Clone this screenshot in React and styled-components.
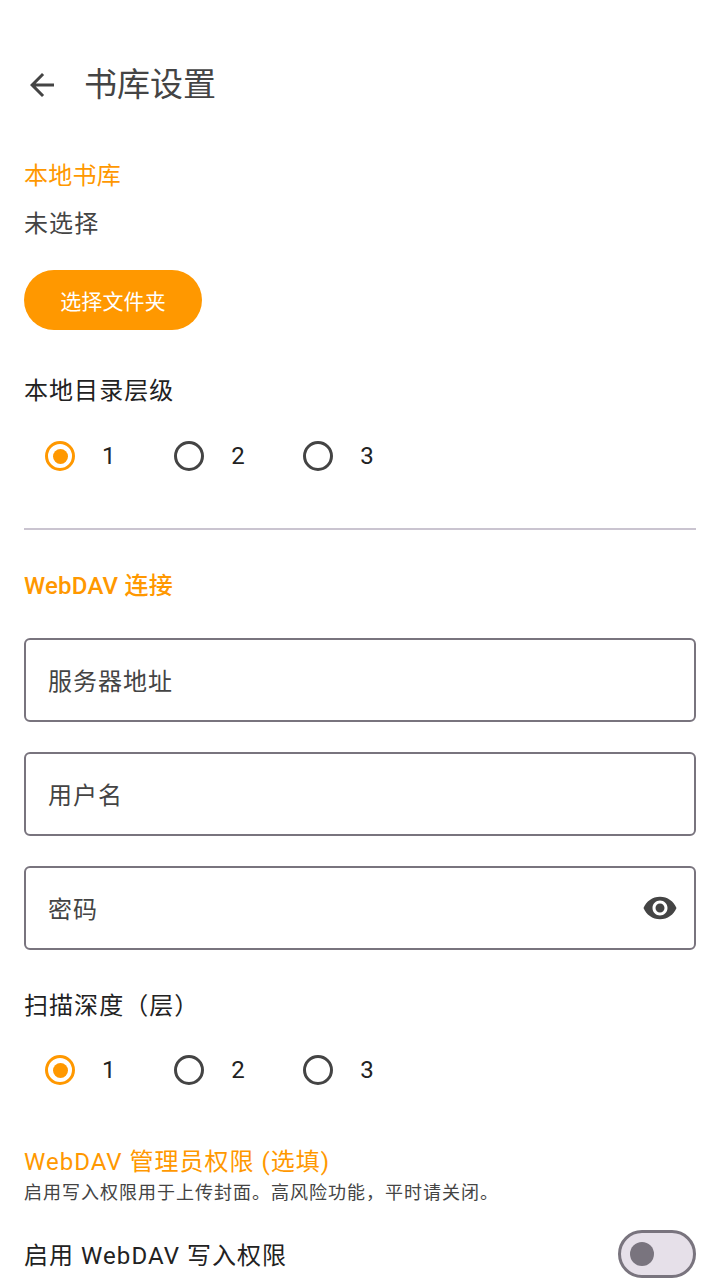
import styled, { createGlobalStyle } from "styled-components";

const GlobalStyle = createGlobalStyle`
  html, body {
    margin: 0;
    padding: 0;
    background: #fff;
    height: 1280px;
    overflow: hidden;
  }
  body {
    font-family: Roboto, "Noto Sans CJK SC", sans-serif;
  }
`;

const Page = styled.div`
  width: 720px;
  height: 1280px;
  overflow: hidden;
  box-sizing: border-box;
  padding: 0 24px;
`;

const Header = styled.header`
  display: flex;
  align-items: center;
  gap: 24px;
  height: 36px;
  padding-top: 67px;
  margin-bottom: 55px;
`;

const Title = styled.h1`
  margin: 0;
  font-size: 33px;
  line-height: 36px;
  font-weight: 400;
  color: #444;
`;

const SectionTitle = styled.h2`
  margin: ${(p) => p.$top || 0}px 0 0;
  font-size: 24px;
  line-height: 36px;
  font-weight: ${(p) => p.$weight || 400};
  letter-spacing: ${(p) => p.$spacing || 0.225}px;
  color: #ff9800;
`;

const BodyText = styled.p`
  margin: 12px 0 0;
  font-size: 24px;
  line-height: 36px;
  letter-spacing: 1.1px;
  color: #444;
`;

const Button = styled.button`
  display: block;
  margin-top: 28px;
  width: 178px;
  height: 60px;
  border: 0;
  border-radius: 30px;
  background: #ff9800;
  color: #fff;
  font-family: inherit;
  font-size: 21px;
  letter-spacing: 0.15px;
  padding: 0;
`;

const FieldLabel = styled.div`
  margin-top: ${(p) => p.$top}px;
  font-size: 24px;
  line-height: 36px;
  letter-spacing: 1.05px;
  color: #222;
`;

const RadioGroup = styled.div`
  display: flex;
  gap: 37.25px;
  margin-top: ${(p) => p.$top}px;
`;

const RadioItem = styled.div`
  display: flex;
  align-items: center;
  height: 72px;
`;

const RadioTouch = styled.div`
  display: flex;
  align-items: center;
  justify-content: center;
  width: 72px;
  height: 72px;
  margin-right: 6px;
`;

const RadioRing = styled.div`
  display: flex;
  align-items: center;
  justify-content: center;
  width: 30px;
  height: 30px;
  box-sizing: border-box;
  border: 3px solid ${(p) => (p.$on ? "#ff9800" : "#444")};
  border-radius: 50%;
`;

const RadioDot = styled.div`
  width: 15px;
  height: 15px;
  border-radius: 50%;
  background: #ff9800;
`;

const RadioLabel = styled.span`
  font-size: 24px;
  line-height: 36px;
  letter-spacing: 0.375px;
  color: #222;
`;

const Divider = styled.hr`
  margin: 36px 0 0;
  border: 0;
  height: 2px;
  background: #cac4d0;
`;

const Fields = styled.div`
  display: flex;
  flex-direction: column;
  gap: 30px;
  margin-top: 34px;
`;

const TextField = styled.div`
  display: flex;
  align-items: center;
  justify-content: space-between;
  height: 84px;
  box-sizing: border-box;
  border: 2px solid #79747e;
  border-radius: 6px;
  padding: 0 16px 1px 22px;
  font-size: 24px;
  letter-spacing: 1px;
  color: #444;
`;

const Hint = styled.p`
  margin: -1px 0 0;
  font-size: 18px;
  line-height: 27px;
  letter-spacing: 1px;
  color: #444;
`;

const SwitchRow = styled.div`
  display: flex;
  align-items: center;
  justify-content: space-between;
  margin-top: 24px;
  font-size: 24px;
  letter-spacing: 1.05px;
  color: #222;
`;

const SwitchLabel = styled.span`
  margin-bottom: 2px;
`;

const SwitchTrack = styled.div`
  display: flex;
  align-items: center;
  width: 78px;
  height: 48px;
  box-sizing: border-box;
  border: 3px solid #79747e;
  border-radius: 24px;
  background: #e6e0e9;
  padding-left: 9px;
`;

const SwitchThumb = styled.div`
  width: 24px;
  height: 24px;
  border-radius: 50%;
  background: #79747e;
`;

const BackIcon = () => (
  <svg width="36" height="36" viewBox="0 0 24 24" fill="#444">
    <path d="M20 11H7.83l5.59-5.59L12 4l-8 8 8 8 1.41-1.41L7.83 13H20v-2z" />
  </svg>
);

const EyeIcon = () => (
  <svg width="36" height="36" viewBox="0 0 24 24" fill="#444">
    <path d="M12 4.5C7 4.5 2.73 7.61 1 12c1.73 4.39 6 7.5 11 7.5s9.27-3.11 11-7.5c-1.73-4.39-6-7.5-11-7.5zM12 17c-2.76 0-5-2.24-5-5s2.24-5 5-5 5 2.24 5 5-2.24 5-5 5zm0-8c-1.66 0-3 1.34-3 3s1.34 3 3 3 3-1.34 3-3-1.34-3-3-3z" />
  </svg>
);

const LevelRadios = ({ top }) => (
  <RadioGroup $top={top}>
    {[1, 2, 3].map((n) => (
      <RadioItem key={n}>
        <RadioTouch>
          <RadioRing $on={n === 1}>{n === 1 && <RadioDot />}</RadioRing>
        </RadioTouch>
        <RadioLabel>{n}</RadioLabel>
      </RadioItem>
    ))}
  </RadioGroup>
);

const App = () => {
  return (
    <Page>
      <GlobalStyle />
      <Header>
        <BackIcon />
        <Title>书库设置</Title>
      </Header>

      <SectionTitle>本地书库</SectionTitle>
      <BodyText>未选择</BodyText>
      <Button>选择文件夹</Button>
      <FieldLabel $top={43}>本地目录层级</FieldLabel>
      <LevelRadios top={11} />
      <Divider />

      <SectionTitle $top={38} $weight={500}>WebDAV 连接</SectionTitle>
      <Fields>
        <TextField>服务器地址</TextField>
        <TextField>用户名</TextField>
        <TextField>
          密码
          <EyeIcon />
        </TextField>
      </Fields>
      <FieldLabel $top={38}>扫描深度（层）</FieldLabel>
      <LevelRadios top={10} />

      <SectionTitle $top={38} $spacing={1}>WebDAV 管理员权限 (选填)</SectionTitle>
      <Hint>启用写入权限用于上传封面。高风险功能，平时请关闭。</Hint>
      <SwitchRow>
        <SwitchLabel>启用 WebDAV 写入权限</SwitchLabel>
        <SwitchTrack>
          <SwitchThumb />
        </SwitchTrack>
      </SwitchRow>
    </Page>
  );
};

export default App;
